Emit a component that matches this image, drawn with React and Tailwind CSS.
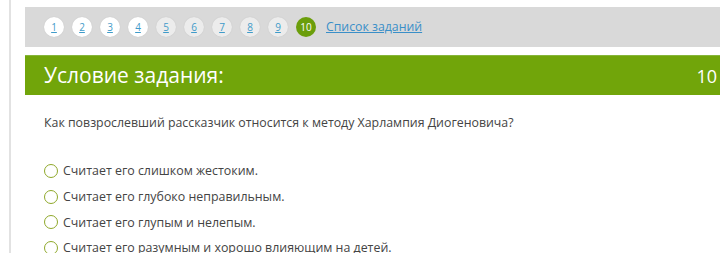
const options = [
  'Считает его слишком жестоким.',
  'Считает его глубоко неправильным.',
  'Считает его глупым и нелепым.',
  'Считает его разумным и хорошо влияющим на детей.',
]

function PageDot({ n, done }) {
  return (
    <a
      href="#"
      className={`w-[20px] h-[20px] rounded-full flex items-center justify-center text-[10px] leading-none text-[#3f9bc9] underline shadow-[0_0_1px_#bbb] ${done ? 'bg-white' : 'bg-[#ececec]'}`}
    >
      {n}
    </a>
  )
}

export default function App() {
  return (
    <div className="w-[720px] h-[253px] overflow-hidden bg-white font-['Open_Sans',sans-serif] flex">
      <div className="w-[9px] shrink-0" />
      <div className="w-[2px] shrink-0 bg-[#e2e2e2]" />
      <div className="flex-1 pl-[14px] pt-[7px]">
        <div className="h-[40px] bg-[#d9d9d9] flex items-center pl-[19px] gap-[8px]">
          {[1, 2, 3, 4, 5, 6, 7, 8, 9].map(n => (
            <PageDot key={n} n={n} done={n <= 4} />
          ))}
          <div className="w-[20px] h-[20px] rounded-full bg-[#6b9e0b] text-white text-[10px] flex items-center justify-center">
            10
          </div>
          <a href="#" className="ml-[2px] text-[12.3px] text-[#3a8fc8] underline">
            Список заданий
          </a>
        </div>
        <div className="mt-[8px] h-[40px] bg-[#71a50a] border-t border-[#86b53a] flex items-center justify-between pl-[19px] pr-[3px] text-white">
          <span className="text-[21px] leading-none">Условие задания:</span>
          <span className="text-[18px] leading-none">10</span>
        </div>
        <div className="pl-[19px] pt-[19px] text-[#444]">
          <p className="text-[12.35px] leading-[18px]">
            Как повзрослевший рассказчик относится к методу Харлампия Диогеновича?
          </p>
          <div className="mt-[30px] flex flex-col gap-[8px]">
            {options.map(o => (
              <label key={o} className="flex items-center gap-[5px] text-[12.4px] leading-[17.8px]">
                <span className="w-[14px] h-[14px] rounded-full border-[1.5px] border-[#8fa82a] shrink-0" />
                {o}
              </label>
            ))}
          </div>
        </div>
      </div>
    </div>
  )
}
